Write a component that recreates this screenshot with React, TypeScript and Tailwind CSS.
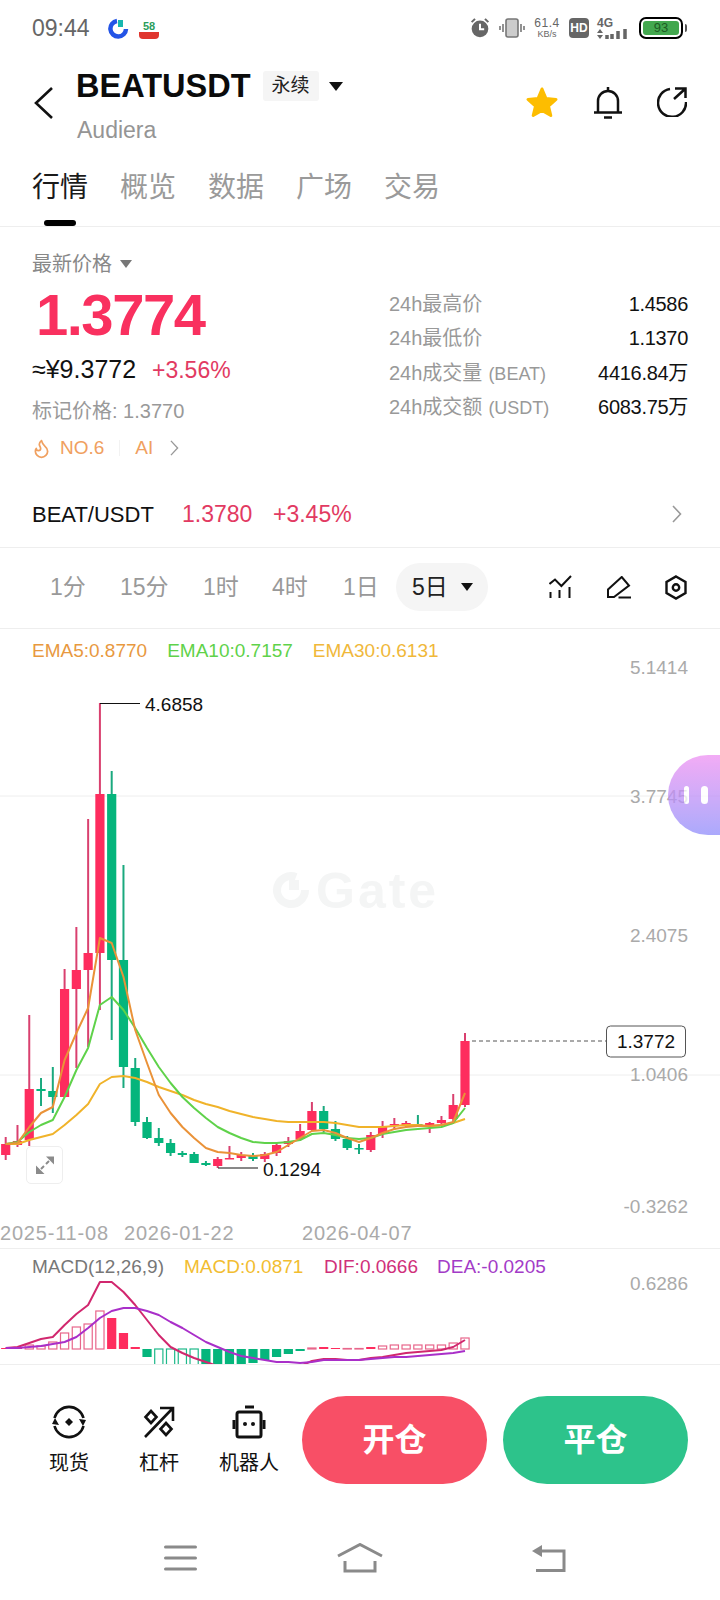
import { Flame } from "lucide-react";

const xAt = (i: number) => 5.7 + 11.777 * i;

// top, bottom, wick top, wick bottom, up
const candles: [number, number, number, number, boolean][] = [
  [1144, 1155, 1137, 1160, true],
  [1141, 1145, 1125, 1147, true],
  [1089, 1140, 1015, 1146, true],
  [1089, 1091, 1078, 1106, false],
  [1091, 1097, 1067, 1113, false],
  [989, 1097, 969, 1097, true],
  [970, 989, 927, 1068, true],
  [953, 970, 819, 1047, true],
  [794, 953, 703, 1010, true],
  [794, 960, 771, 1040, false],
  [960, 1067, 865, 1088, false],
  [1068, 1122, 1058, 1126, false],
  [1122, 1138, 1117, 1139, false],
  [1138, 1143, 1128, 1146, false],
  [1143, 1153, 1139, 1156, false],
  [1153, 1155, 1151, 1157, false],
  [1154, 1163, 1152, 1163, false],
  [1163, 1165, 1161, 1166, false],
  [1159, 1166, 1157, 1168, true],
  [1158, 1159, 1146, 1159, true],
  [1155, 1158, 1152, 1161, true],
  [1156, 1159, 1153, 1161, false],
  [1154, 1159, 1152, 1162, true],
  [1145, 1153, 1143, 1156, true],
  [1141, 1144, 1137, 1147, true],
  [1131, 1139, 1124, 1141, true],
  [1111, 1130, 1102, 1131, true],
  [1111, 1129, 1106, 1132, false],
  [1129, 1139, 1121, 1141, false],
  [1139, 1148, 1136, 1150, false],
  [1148, 1149, 1144, 1154, false],
  [1135, 1150, 1132, 1152, true],
  [1126, 1134, 1121, 1138, true],
  [1124, 1125, 1118, 1130, true],
  [1123, 1125, 1121, 1128, true],
  [1124, 1126, 1115, 1127, false],
  [1123, 1125, 1122, 1133, true],
  [1120, 1123, 1116, 1126, true],
  [1105, 1119, 1094, 1122, true],
  [1041, 1105, 1033, 1107, true],
];

const ema5 = [1144, 1143, 1127, 1113, 1107, 1060, 1033, 1008, 938, 943, 977, 1030, 1063, 1095, 1113, 1127, 1138, 1148, 1152, 1153, 1155, 1156, 1155, 1152, 1145, 1138, 1131, 1130, 1133, 1138, 1142, 1138, 1133, 1129, 1127, 1126, 1126, 1125, 1122, 1093];
const ema10 = [1144, 1142, 1132, 1125, 1120, 1097, 1070, 1048, 1005, 997, 1010, 1028, 1048, 1067, 1083, 1097, 1108, 1118, 1127, 1133, 1138, 1142, 1143, 1143, 1142, 1140, 1134, 1133, 1135, 1138, 1139, 1138, 1134, 1132, 1130, 1129, 1128, 1127, 1123, 1108];
const ema30 = [1144, 1144, 1140, 1137, 1134, 1125, 1115, 1104, 1084, 1077, 1076, 1078, 1082, 1087, 1091, 1095, 1100, 1104, 1107, 1111, 1114, 1117, 1119, 1121, 1122, 1122, 1122, 1122, 1123, 1125, 1127, 1127, 1127, 1126, 1125, 1125, 1126, 1125, 1123, 1119];

const hist: [number, number, boolean][] = [
  [1348, 1349, true], [1347, 1349, true], [1345, 1349, false], [1346, 1349, false], [1342, 1349, false], [1333, 1349, false],
  [1327, 1349, false], [1324, 1349, false], [1311, 1349, false], [1318, 1349, true], [1333, 1349, true], [1347, 1349, true],
  [1349, 1357, true], [1349, 1370, false], [1349, 1370, false], [1349, 1370, false], [1349, 1370, false], [1349, 1370, true],
  [1349, 1370, true], [1349, 1370, true], [1349, 1370, true], [1349, 1363, true], [1349, 1360, true], [1349, 1357, true],
  [1349, 1354, true], [1349, 1351, true], [1348, 1349, false], [1347, 1349, true], [1348, 1349, true], [1348.5, 1349, false],
  [1348.5, 1349, false], [1347, 1349, true], [1346, 1349, false], [1345, 1349, false], [1345, 1349, false], [1345, 1349, false],
  [1345, 1349, false], [1345, 1349, false], [1343, 1349, false], [1338, 1349, false],
];
const dif = [1348, 1347, 1343, 1339, 1337, 1325, 1314, 1305, 1282, 1282, 1292, 1305, 1320, 1335, 1347, 1353, 1358, 1362, 1366, 1370, 1373, 1376, 1376, 1374, 1370, 1366, 1361, 1359, 1359, 1360, 1360, 1358, 1357, 1355, 1353, 1352, 1351, 1350, 1347, 1340];
const dea = [1348, 1348, 1347, 1346, 1344, 1342, 1337, 1328, 1318, 1311, 1308, 1308, 1311, 1315, 1322, 1328, 1335, 1342, 1347, 1352, 1356, 1358, 1360, 1362, 1362, 1363, 1362, 1360, 1360, 1360, 1360, 1359, 1358, 1357, 1357, 1356, 1355, 1354, 1353, 1351];

const pts = (ys: number[]) => ys.map((y, i) => `${xAt(i).toFixed(1)},${y}`).join(" ");

const stats = [
  { zh: "24h最高价", en: "", value: "1.4586" },
  { zh: "24h最低价", en: "", value: "1.1370" },
  { zh: "24h成交量", en: "(BEAT)", value: "4416.84万" },
  { zh: "24h成交额", en: "(USDT)", value: "6083.75万" },
];

const StatusBar = () => (
  <div className="h-14 relative flex items-center pl-8 text-[#666]">
    <span className="text-[23px] leading-none w-[76px]">09:44</span>
    <svg width="21" height="21" viewBox="0 0 21 21" className="mr-[10px]">
      <path d="M9 3 A7.8 7.8 0 1 0 18 11" fill="none" stroke="#2354e6" strokeWidth="4.5" />
      <rect x="10" y="2" width="5" height="7" fill="#17b7b0" />
    </svg>
    <div className="w-5 h-[18px] mt-1 flex flex-col items-center justify-end">
      <span className="text-[11px] leading-[11px] font-bold text-[#2a9d5c]">58</span>
      <span className="w-5 h-[7px] rounded-b-[4px] bg-[#e0352e]" />
    </div>
    <div className="ml-auto mr-[33px] flex items-center">
      <svg width="20" height="22" viewBox="0 0 24 26" className="mr-[9px]">
        <circle cx="12" cy="14" r="10" fill="#666" />
        <path d="M12 8 V14.5 H17" fill="none" stroke="#fff" strokeWidth="2.4" />
        <path d="M2 6 L6 2 M22 6 L18 2" stroke="#666" strokeWidth="2.4" />
      </svg>
      <svg width="26" height="20" viewBox="0 0 26 20" className="mr-[9px]">
        <rect x="7" y="1" width="12" height="18" rx="2" fill="#ccc" stroke="#777" strokeWidth="1.6" />
        <path d="M4 6 V14 M1 8 V12 M22 6 V14 M25 8 V12" stroke="#777" strokeWidth="1.6" />
      </svg>
      <div className="w-[26px] flex flex-col items-center mr-[9px]">
        <span className="text-[12px] leading-[11px] tracking-[0.5px]">61.4</span>
        <span className="text-[9px] leading-[10px]">KB/s</span>
      </div>
      <div className="w-5 h-5 rounded-[4px] bg-[#666] text-white text-[12px] font-bold leading-5 text-center mr-[8px]">HD</div>
      <div className="w-[31px] flex flex-col mr-[11px]">
        <span className="text-[12px] leading-[11px] font-bold">4G</span>
        <svg width="31" height="10" viewBox="0 0 31 10">
          <path d="M0 4 L3 0 L6 4Z M0 6 H6 L3 10Z" fill="#666" />
          <path d="M10 6 V10 M15 5 V10 M21 2 V10 M28 0 V10" stroke="#666" strokeWidth="3.5" />
        </svg>
      </div>
      <div className="w-[44px] h-[22px] rounded-[7px] border-2 border-black p-[2px]">
        <div className="h-full rounded-[3px] bg-[#43a84f] text-[13px] leading-[14px] text-center text-[#1d5c24]">93</div>
      </div>
      <div className="w-[2px] h-2 ml-[2px] bg-[#555] rounded-r-[2px]" />
    </div>
  </div>
);

const Header = () => (
  <div className="h-[90px] flex pl-[34px] pr-[33px]">
    <svg width="20" height="32" viewBox="0 0 20 32" className="mt-[31px]" fill="none" stroke="#111" strokeWidth="2.6">
      <path d="M18 1 L2 16 L18 31" />
    </svg>
    <div className="ml-[22px] flex flex-col">
      <div className="flex items-center h-[30px] mt-[15px]">
        <span className="text-[32.5px] leading-none font-bold text-[#0b0b0b]">BEATUSDT</span>
        <span className="ml-3 w-[56px] h-[30px] bg-[#f5f5f5] rounded-[3px] text-[19px] leading-[30px] text-center text-[#222]">永续</span>
        <span className="ml-[10px] w-0 h-0 border-x-[7px] border-x-transparent border-t-[9px] border-t-[#111]" />
      </div>
      <span className="mt-[14px] ml-[1px] text-[23px] leading-[30px] text-[#959595]">Audiera</span>
    </div>
    <div className="ml-auto flex items-center gap-[35px] h-[36px] mt-[28px]">
      <svg width="34" height="32" viewBox="0 0 34 32">
        <path d="M17 3 L21 12.5 L31 13.4 L23.5 20 L25.8 29.5 L17 24.5 L8.2 29.5 L10.5 20 L3 13.4 L13 12.5Z" fill="#fdbd00" stroke="#fdbd00" strokeWidth="3" strokeLinejoin="round" />
      </svg>
      <svg width="28" height="33" viewBox="0 0 28 33" fill="none" stroke="#111" strokeWidth="2.5">
        <path d="M4 26 V15 a10 10 0 0 1 20 0 V26" />
        <path d="M0 26.5 H28 M14 1 V5 M10 31.5 H18" />
      </svg>
      <svg width="30" height="30" viewBox="0 0 30 30" fill="none" stroke="#111" strokeWidth="2.5">
        <path d="M13 2 A14 14 0 1 0 29 15" />
        <path d="M18 1.5 H28.5 V11 M28 2 L17 12" />
      </svg>
    </div>
  </div>
);

const Tabs = () => (
  <div className="h-[81px] flex gap-8 pl-8 pt-[25px] border-b border-[#eeeeee] text-[28px] leading-[34px] text-[#9a9a9a]">
    <div className="flex flex-col">
      <span className="text-[#1a1a1a]">行情</span>
      <span className="mt-[15px] ml-3 w-8 h-[6px] rounded-full bg-black" />
    </div>
    <span>概览</span>
    <span>数据</span>
    <span>广场</span>
    <span>交易</span>
  </div>
);

const PriceBlock = () => (
  <div className="h-[257px] flex pl-8 pr-8">
    <div className="w-[357px] pt-[23px] flex flex-col">
      <div className="h-7 flex items-center text-[20px] text-[#888]">
        最新价格
        <span className="ml-2 w-0 h-0 border-x-[6px] border-x-transparent border-t-[8px] border-t-[#777]" />
      </div>
      <div className="mt-[6px] ml-1 h-[62px] text-[58px] leading-[62px] font-bold tracking-[-1.5px] text-[#f9305f]">1.3774</div>
      <div className="mt-[10px] h-7 flex items-center">
        <span className="text-[#111] w-[120px] text-[25px]">≈¥9.3772</span>
        <span className="text-[#e23a62] text-[23px]">+3.56%</span>
      </div>
      <div className="mt-[13px] h-7 flex items-center text-[20px] text-[#999]">标记价格: 1.3770</div>
      <div className="mt-[9px] h-7 flex items-center text-[19px] text-[#f0a060]">
        <Flame size={21} strokeWidth={2} className="-ml-[1px]" />
        <span className="ml-[8px]">NO.6</span>
        <span className="ml-[15px] w-px h-4 bg-[#f2f2f2]" />
        <span className="ml-[15px]">AI</span>
        <svg width="9" height="16" viewBox="0 0 10 18" className="ml-[17px]" fill="none" stroke="#999" strokeWidth="1.5">
          <path d="M1 1 L8.5 9 L1 17" />
        </svg>
      </div>
    </div>
    <div className="flex-1 pt-[60px] flex flex-col">
      {stats.map((s) => (
        <div key={s.zh} className="h-[34.3px] flex items-center justify-between text-[20px]">
          <span className="text-[#999]">
            {s.zh}
            {s.en && <span className="ml-[6px] text-[18px]">{s.en}</span>}
          </span>
          <span className="text-[#111] tracking-[-0.3px]">{s.value}</span>
        </div>
      ))}
    </div>
  </div>
);

const PairRow = () => (
  <div className="h-[64px] flex items-center pl-8 pr-[38px] pb-[3px] border-b border-[#eeeeee]">
    <span className="text-[22px] text-[#111] w-[150px]">BEAT/USDT</span>
    <span className="text-[23px] text-[#e23a62] w-[91px]">1.3780</span>
    <span className="text-[23px] text-[#e23a62]">+3.45%</span>
    <svg width="10" height="18" viewBox="0 0 10 18" className="ml-auto" fill="none" stroke="#999" strokeWidth="1.6">
      <path d="M1 1 L8.5 9 L1 17" />
    </svg>
  </div>
);

const Timeframes = () => (
  <div className="h-[81px] flex items-center pl-[50px] pr-[33px] pb-[2px] border-b border-[#eeeeee] text-[23px] text-[#999]">
    <span className="w-[70px]">1分</span>
    <span className="w-[83px]">15分</span>
    <span className="w-[69px]">1时</span>
    <span className="w-[71px]">4时</span>
    <span className="w-[53px]">1日</span>
    <div className="w-[92px] h-[48px] rounded-full bg-[#f5f5f5] flex items-center pl-4 text-[#222]">
      5日
      <span className="ml-[13px] w-0 h-0 border-x-[6px] border-x-transparent border-t-[8px] border-t-[#111]" />
    </div>
    <div className="ml-auto flex items-center gap-[34px]">
      <svg width="24" height="24" viewBox="0 0 24 24" fill="none" stroke="#111" strokeWidth="2">
        <path d="M0.5 9 L6 4.5 L12.4 11 L22 1" />
        <path d="M1.5 17 V23 M10.5 15 V23 M20.5 12 V23" />
      </svg>
      <svg width="24" height="23" viewBox="0 0 24 23" fill="none" stroke="#111" strokeWidth="2">
        <path d="M14.7 1 L22 9.5 L7 21 H1 V13.5Z M11.5 21.5 H24" />
      </svg>
      <svg width="22" height="25" viewBox="0 0 22 25" fill="none" stroke="#111" strokeWidth="2.4">
        <path d="M11 1.5 L20.5 7 V18 L11 23.5 L1.5 18 V7Z" />
        <circle cx="11" cy="12.5" r="3.2" />
      </svg>
    </div>
  </div>
);

const KlineChart = () => (
  <svg width="720" height="575" viewBox="0 673 720 575" className="block overflow-visible">
    <path d="M0 796 H720 M0 1075 H720" stroke="#eeeeee" strokeWidth="1" />
    {/* watermark */}
    <path d="M296 877 A14 14 0 1 0 305 890" fill="none" stroke="#f4f5f5" strokeWidth="8" />
    <rect x="289" y="880" width="10" height="10" fill="#f4f5f5" />
    <text x="316" y="908" className="text-[50px] font-bold tracking-[3px] fill-[#f4f5f5]">Gate</text>

    {candles.map(([top, bottom, wt, wb, up], i) => (
      <g key={i}>
        <line x1={xAt(i)} x2={xAt(i)} y1={wt} y2={wb} stroke={up ? "#d9406f" : "#1aa97e"} strokeWidth="2" />
        <rect x={xAt(i) - 4.6} y={top} width="9.2" height={Math.max(bottom - top, 1.5)} fill={up ? "#fe2c5e" : "#05b57c"} />
      </g>
    ))}
    <polyline points={pts(ema30)} fill="none" stroke="#f0b32a" strokeWidth="2" strokeLinejoin="round" />
    <polyline points={pts(ema10)} fill="none" stroke="#5fd24a" strokeWidth="2" strokeLinejoin="round" />
    <polyline points={pts(ema5)} fill="none" stroke="#ea9238" strokeWidth="2" strokeLinejoin="round" />

    <path d="M100 703.5 H140 M218 1168 H258" stroke="#111" strokeWidth="1" />
    <text x="145" y="710.5" className="text-[19px] fill-[#111]">4.6858</text>
    <text x="263" y="1175.5" className="text-[19px] fill-[#111]">0.1294</text>

    <path d="M472 1041 H606" stroke="#555" strokeWidth="1" strokeDasharray="4 3" />
    <rect x="606.5" y="1026" width="79" height="31" rx="4" fill="#fff" stroke="#555" />
    <text x="646" y="1048" textAnchor="middle" className="text-[19px] fill-[#111]">1.3772</text>

    {[
      ["5.1414", 674],
      ["3.7745", 803],
      ["2.4075", 942],
      ["1.0406", 1081],
      ["-0.3262", 1212.5],
    ].map(([t, y]) => (
      <text key={t} x="688" y={y} textAnchor="end" className="text-[19px] fill-[#aaa]">{t}</text>
    ))}
    {[
      ["2025-11-08", 0],
      ["2026-01-22", 124],
      ["2026-04-07", 302],
    ].map(([t, x]) => (
      <text key={t} x={x} y="1240" className="text-[20px] tracking-[0.8px] fill-[#aaa]">{t}</text>
    ))}
  </svg>
);

const MacdChart = () => (
  <svg width="720" height="79" viewBox="0 1285 720 79" className="block overflow-visible">
    <defs>
      <clipPath id="macd-clip">
        <rect x="0" y="1240" width="720" height="124" />
      </clipPath>
    </defs>
    <g clipPath="url(#macd-clip)">
      {hist.map(([top, bottom, solid], i) => {
        const up = top < 1349;
        const color = up ? "#fe2c5e" : "#05b57c";
        return solid ? (
          <rect key={i} x={xAt(i) - 4.6} y={top} width="9.2" height={bottom - top} fill={color} />
        ) : (
          <rect key={i} x={xAt(i) - 4.1} y={top} width="8.2" height={bottom - top} fill="none" stroke={up ? "#e8668b" : "#1fb98a"} strokeWidth="1.2" />
        );
      })}
      <polyline points={pts(dif)} fill="none" stroke="#d1276e" strokeWidth="2" strokeLinejoin="round" />
      <polyline points={pts(dea)} fill="none" stroke="#a92fc9" strokeWidth="2" strokeLinejoin="round" />
    </g>
    <text x="688" y="1290" textAnchor="end" className="text-[19px] fill-[#aaa]">0.6286</text>
  </svg>
);

const ActionBar = () => (
  <div className="pt-[31px] pl-6 pr-8 flex">
    <div className="w-[90px] flex flex-col items-center justify-center gap-3">
      <svg width="34" height="34" viewBox="0 0 34 34" fill="none" stroke="#111" strokeWidth="2.6">
        <path d="M2.5 13 A15 15 0 0 1 31.5 13" />
        <path d="M2.5 21 A15 15 0 0 0 31.5 21" />
        <path d="M27 14 L34 15 L31 21Z M0 19 L7 20 L3 13Z" fill="#111" stroke="none" />
        <path d="M17 13 L21 17 L17 21 L13 17Z" fill="#111" stroke="none" />
      </svg>
      <span className="h-6 text-[20px] leading-6 text-[#111]">现货</span>
    </div>
    <div className="w-[90px] flex flex-col items-center justify-center gap-3">
      <svg width="34" height="34" viewBox="0 0 34 34" fill="none" stroke="#111" strokeWidth="2.6">
        <path d="M3 32 L30 4 M18 3 H31 V16" />
        <path d="M9 6 L14.5 12 L9 18 L3.5 12Z M24 18 L29.5 24 L24 30 L18.5 24Z" />
      </svg>
      <span className="h-6 text-[20px] leading-6 text-[#111]">杠杆</span>
    </div>
    <div className="w-[90px] flex flex-col items-center justify-center gap-3">
      <svg width="34" height="34" viewBox="0 0 34 34" fill="none" stroke="#111" strokeWidth="3">
        <path d="M13 2 H22" />
        <rect x="5" y="7" width="24" height="25" rx="2" />
        <path d="M2 15 V24 M32 15 V24" />
        <circle cx="13" cy="19" r="2" fill="#111" stroke="none" />
        <circle cx="21" cy="19" r="2" fill="#111" stroke="none" />
      </svg>
      <span className="h-6 text-[20px] leading-6 text-[#111]">机器人</span>
    </div>
    <div className="ml-2 flex gap-4">
      <div className="w-[185px] h-[88px] rounded-full bg-[#f84f66] flex items-center justify-center text-[32px] font-bold text-white">开仓</div>
      <div className="w-[185px] h-[88px] rounded-full bg-[#2dc38b] flex items-center justify-center text-[32px] font-bold text-white">平仓</div>
    </div>
  </div>
);

const NavBar = () => (
  <div className="mt-[59px] h-[30px] pl-[164px] flex items-center">
    <svg width="33" height="26" viewBox="0 0 33 26" stroke="#8a8a8a" strokeWidth="3" strokeLinecap="round">
      <path d="M1.5 2 H31.5 M1.5 13 H31.5 M1.5 24 H31.5" />
    </svg>
    <svg width="46" height="30" viewBox="0 0 46 30" className="ml-[140px]" fill="none" stroke="#8a8a8a" strokeWidth="3">
      <path d="M1 13 L23 1.5 L45 13" />
      <path d="M8 18 V28 H38 V18" />
    </svg>
    <svg width="34" height="28" viewBox="0 0 34 28" className="ml-[149px]" fill="none" stroke="#8a8a8a" strokeWidth="3">
      <path d="M6 7 H32 V26.5 H4" />
      <path d="M0 7 L10 1 V13Z" fill="#8a8a8a" stroke="none" />
    </svg>
  </div>
);

export default function App() {
  return (
    <div className="relative w-[720px] h-[1600px] overflow-hidden bg-white font-['Liberation_Sans','Noto_Sans_CJK_SC',sans-serif]">
      <StatusBar />
      <Header />
      <Tabs />
      <PriceBlock />
      <PairRow />
      <Timeframes />

      <div className="h-[44px] pl-8 flex items-center gap-5 text-[19px]">
        <span className="text-[#e8993f]">EMA5:0.8770</span>
        <span className="text-[#5fd24a]">EMA10:0.7157</span>
        <span className="text-[#f0b83a]">EMA30:0.6131</span>
      </div>
      <KlineChart />

      <div className="border-t border-b border-[#eeeeee]">
        <div className="h-[36px] pl-8 flex items-center text-[19px]">
          <span className="text-[#777] w-[152px]">MACD(12,26,9)</span>
          <span className="text-[#f2bd30] w-[140px]">MACD:0.0871</span>
          <span className="text-[#d0307a] w-[113px]">DIF:0.0666</span>
          <span className="text-[#a33bc7]">DEA:-0.0205</span>
        </div>
        <MacdChart />
      </div>

      <ActionBar />
      <NavBar />

      {/* expand button over the chart */}
      <div className="absolute left-[26px] top-[1146px] w-[37px] h-[38px] rounded-[5px] border border-[#eeeeee] bg-white flex items-center justify-center">
        <svg width="18" height="18" viewBox="0 0 18 18" fill="#8b8b8b" stroke="#8b8b8b">
          <path d="M10 0.5 H18 V8.5Z M0 9.5 V18 H8.5Z" stroke="none" />
          <path d="M5 13 L8 10 M10 8 L13 5" strokeWidth="2" />
        </svg>
      </div>

      {/* floating assistant */}
      <div className="absolute right-0 top-[755px] w-[52px] h-[80px] rounded-l-[40px] bg-gradient-to-b from-[#ee90f2] to-[#8f8dfb] opacity-75 flex items-center pl-[16px] gap-[12px]">
        <span className="w-[5px] h-[18px] rounded-full bg-white" />
        <span className="w-[7px] h-[18px] rounded-full bg-white" />
      </div>
    </div>
  );
}
